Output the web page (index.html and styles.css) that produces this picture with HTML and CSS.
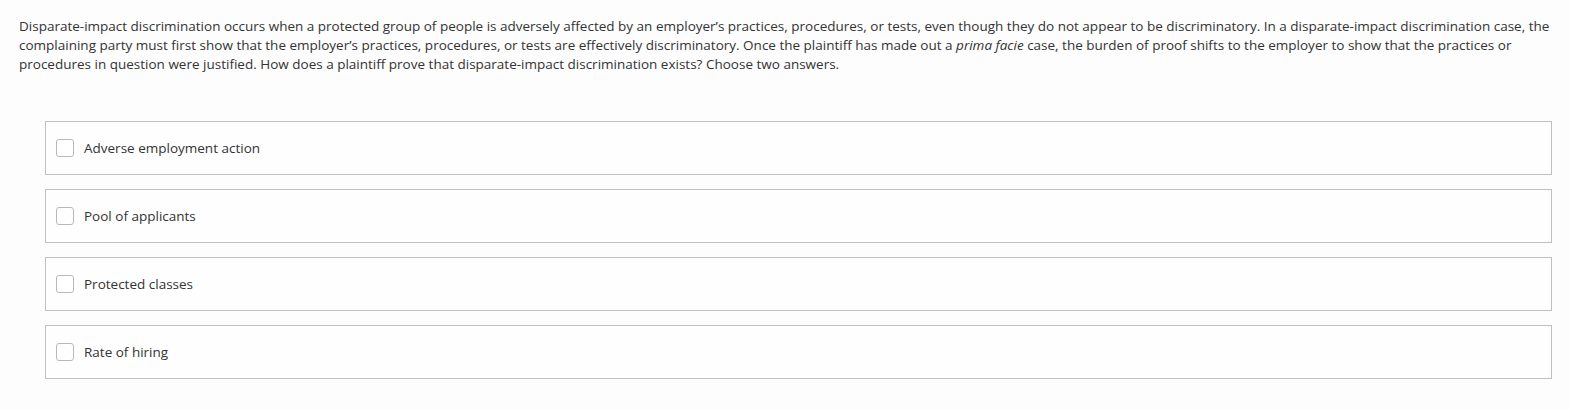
FILE: index.html
```html
<!DOCTYPE html>
<html>
<head>
<meta charset="utf-8">
<link rel="stylesheet" href="styles.css">
</head>
<body>
<div class="question">
  <p class="prompt">Disparate-impact discrimination occurs when a protected group of people is adversely affected by an employer’s practices, procedures, or tests, even though they do not appear to be discriminatory. In a disparate-impact discrimination case, the complaining party must first show that the employer’s practices, procedures, or tests are effectively discriminatory. Once the plaintiff has made out a <em>prima facie</em> case, the burden of proof shifts to the employer to show that the practices or procedures in question were justified. How does a plaintiff prove that disparate-impact discrimination exists? Choose two answers.</p>
  <div class="options">
    <label class="option"><span class="box"></span><span class="text">Adverse employment action</span></label>
    <label class="option"><span class="box"></span><span class="text">Pool of applicants</span></label>
    <label class="option"><span class="box"></span><span class="text">Protected classes</span></label>
    <label class="option"><span class="box"></span><span class="text">Rate of hiring</span></label>
  </div>
</div>
</body>
</html>
```
FILE: styles.css
```css
html, body {
  margin: 0;
  padding: 0;
  background: #fdfdfd;
}
body {
  font-family: "Open Sans", "Liberation Sans", sans-serif;
  font-size: 13.5px;
  color: #333;
}
.question {
  padding: 17px 10px 0 19px;
}
.prompt {
  margin: 0;
  line-height: 19px;
  max-width: 1540px;
}
.options {
  margin: 47px 0 0 26px;
  width: 1507px;
  display: flex;
  flex-direction: column;
  gap: 14px;
}
.option {
  display: flex;
  align-items: center;
  height: 52px;
  border: 1px solid #c0c0c0;
  background: #fefefe;
  padding-left: 10px;
}
.box {
  width: 16px;
  height: 16px;
  border: 1px solid #b9b9b9;
  border-radius: 3px;
  background: #fff;
  margin-right: 10px;
  flex: none;
}
.text {
  line-height: 19px;
}
```
